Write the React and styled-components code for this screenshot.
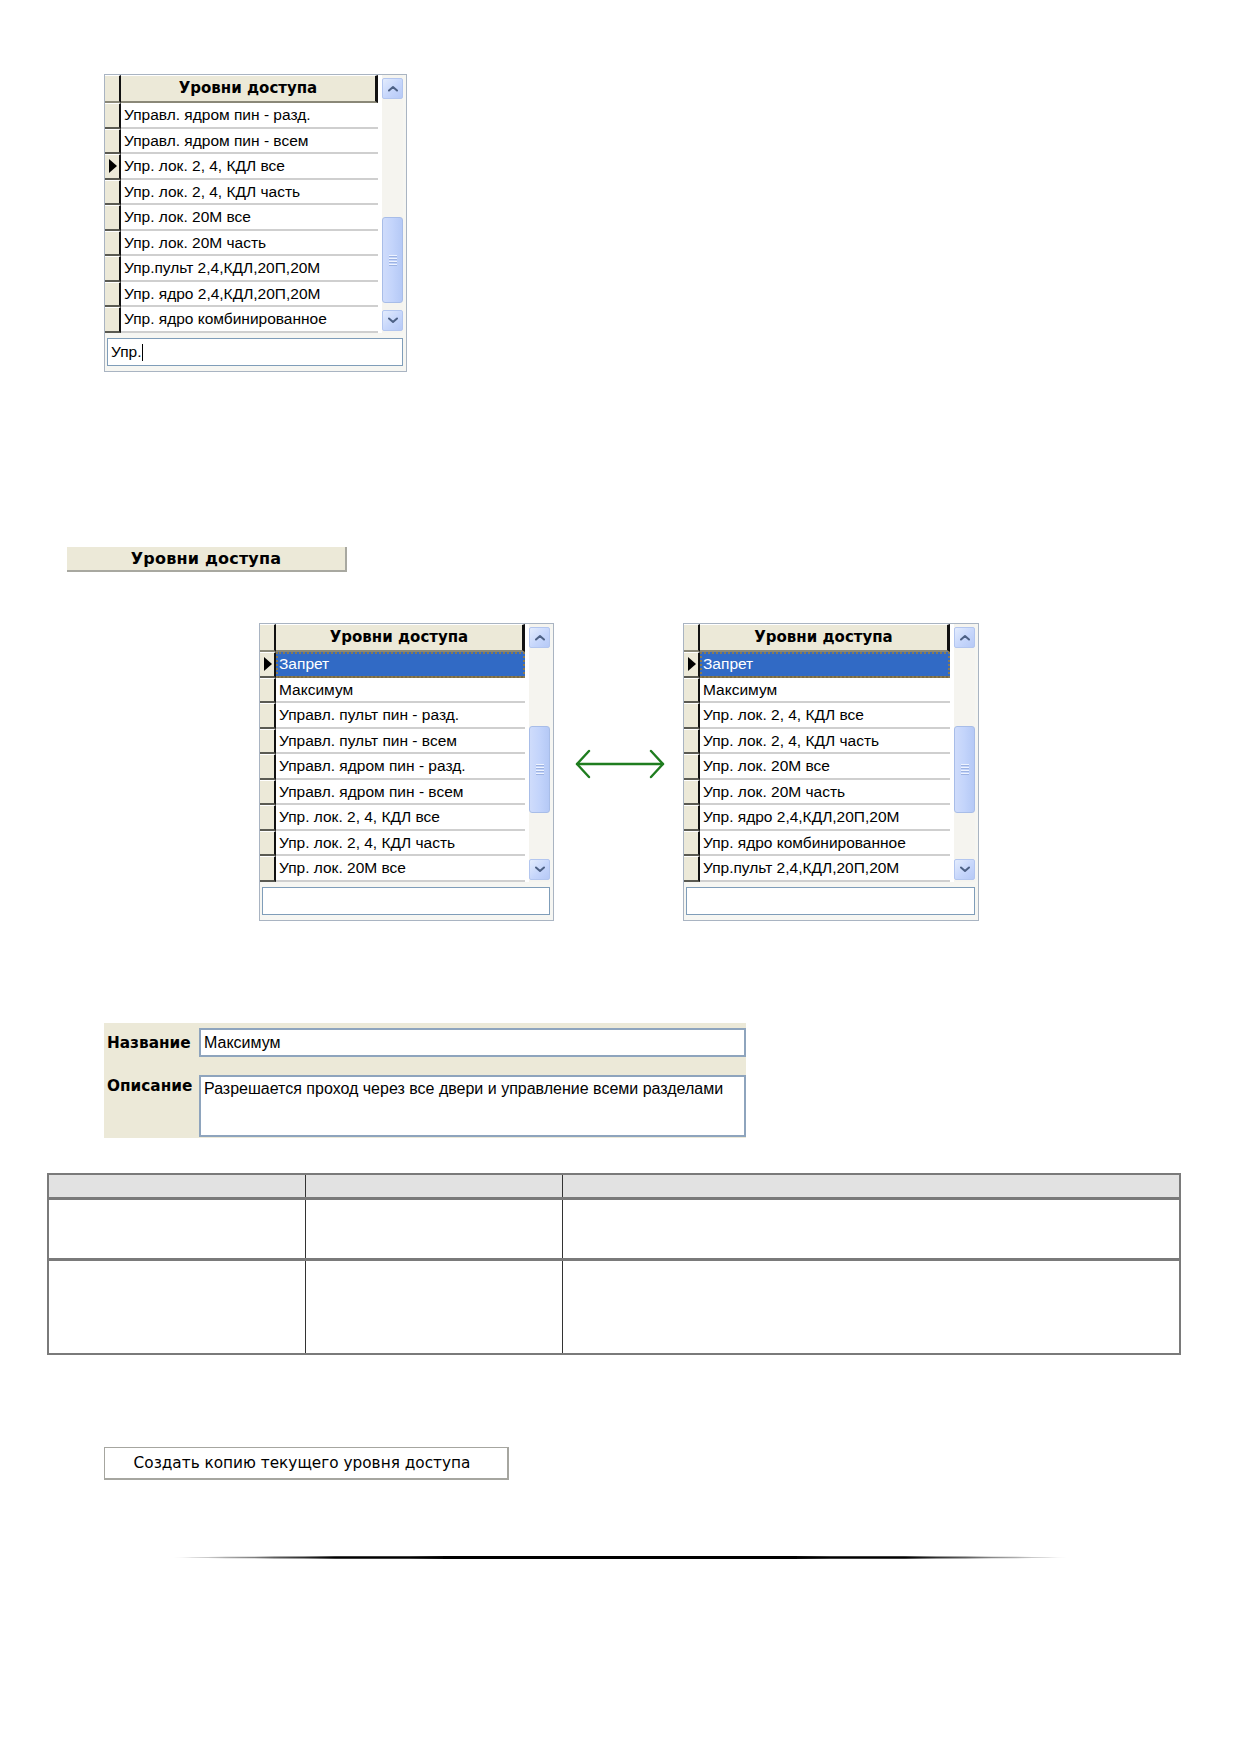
import React from 'react';
import styled, { createGlobalStyle } from 'styled-components';

const GlobalStyle = createGlobalStyle`
  html, body {
    margin: 0;
    padding: 0;
    background: #ffffff;
  }
  body {
    font-family: 'Liberation Sans', Arial, sans-serif;
    color: #000;
  }
`;

const allLevels = [
  'Управл. ядром пин - разд.',
  'Управл. ядром пин - всем',
  'Упр. лок. 2, 4, КДЛ все',
  'Упр. лок. 2, 4, КДЛ часть',
  'Упр. лок. 20М все',
  'Упр. лок. 20М часть',
  'Упр.пульт 2,4,КДЛ,20П,20М',
  'Упр. ядро 2,4,КДЛ,20П,20М',
  'Упр. ядро комбинированное',
];

const beforeSort = [
  'Запрет',
  'Максимум',
  'Управл. пульт пин - разд.',
  'Управл. пульт пин - всем',
  'Управл. ядром пин - разд.',
  'Управл. ядром пин - всем',
  'Упр. лок. 2, 4, КДЛ все',
  'Упр. лок. 2, 4, КДЛ часть',
  'Упр. лок. 20М все',
];

const afterSort = [
  'Запрет',
  'Максимум',
  'Упр. лок. 2, 4, КДЛ все',
  'Упр. лок. 2, 4, КДЛ часть',
  'Упр. лок. 20М все',
  'Упр. лок. 20М часть',
  'Упр. ядро 2,4,КДЛ,20П,20М',
  'Упр. ядро комбинированное',
  'Упр.пульт 2,4,КДЛ,20П,20М',
];

const LevelGrid = ({ width, rows, current, selected, filter, thumbOffset, thumbHeight }) => (
  <GridFrame $width={width}>
    <GridBody>
      <Columns>
        <Row $head>
          <Indicator $head />
          <HeadCell>Уровни доступа</HeadCell>
        </Row>
        {rows.map((name, i) => (
          <Row key={name}>
            <Indicator>{i === current && <Pointer />}</Indicator>
            <Cell $selected={i === selected}>{name}</Cell>
          </Row>
        ))}
      </Columns>
      <ScrollBar>
        <ScrollButton>
          <Chevron viewBox="0 0 10 6"><path d="M1 5 L5 1.5 L9 5" /></Chevron>
        </ScrollButton>
        <Track $offset={thumbOffset}>
          <Thumb $height={thumbHeight}>
            <Grip />
            <Grip />
            <Grip />
            <Grip />
          </Thumb>
        </Track>
        <ScrollButton>
          <Chevron viewBox="0 0 10 6"><path d="M1 1 L5 4.5 L9 1" /></Chevron>
        </ScrollButton>
      </ScrollBar>
    </GridBody>
    <SearchBox>
      {filter}
      {filter && <Caret />}
    </SearchBox>
  </GridFrame>
);

const SwapArrow = () => (
  <ArrowBox>
    <svg width="92" height="30" viewBox="0 0 92 30">
      <g fill="none" stroke="#1f7d1f" strokeWidth="2.4" strokeLinecap="round" strokeLinejoin="round">
        <path d="M3 15 H89" />
        <path d="M15 2 L3 15 L15 28" />
        <path d="M77 2 L89 15 L77 28" />
      </g>
    </svg>
  </ArrowBox>
);

const App = () => (
  <Page>
    <GlobalStyle />
    <FirstBlock>
      <LevelGrid
        width={303}
        rows={allLevels}
        current={2}
        selected={-1}
        filter="Упр."
        thumbOffset={118}
        thumbHeight={86}
      />
    </FirstBlock>

    <TitleBar>Уровни доступа</TitleBar>

    <CompareRow>
      <LevelGrid
        width={295}
        rows={beforeSort}
        current={0}
        selected={0}
        filter=""
        thumbOffset={78}
        thumbHeight={87}
      />
      <SwapArrow />
      <LevelGrid
        width={296}
        rows={afterSort}
        current={0}
        selected={0}
        filter=""
        thumbOffset={78}
        thumbHeight={87}
      />
    </CompareRow>

    <EditPanel>
      <FieldLabel>Название</FieldLabel>
      <NameField>Максимум</NameField>
      <FieldLabel $top>Описание</FieldLabel>
      <NoteField>Разрешается проход через все двери и управление всеми разделами</NoteField>
    </EditPanel>

    <InfoTable>
      <colgroup>
        <col style={{ width: 257 }} />
        <col style={{ width: 257 }} />
        <col />
      </colgroup>
      <thead>
        <tr>
          <HeadTd />
          <HeadTd />
          <HeadTd />
        </tr>
      </thead>
      <tbody>
        <tr>
          <BodyTd $h={58} />
          <BodyTd $h={58} />
          <BodyTd $h={58} />
        </tr>
        <tr>
          <BodyTd $h={92} $last />
          <BodyTd $h={92} $last />
          <BodyTd $h={92} $last />
        </tr>
      </tbody>
    </InfoTable>

    <CopyButton>Создать копию текущего уровня доступа</CopyButton>

    <Divider />
  </Page>
);

// Layout

const Page = styled.div`
  width: 1239px;
  min-height: 1752px;
  padding-top: 74px;
  box-sizing: border-box;
  display: flex;
  flex-direction: column;
  align-items: flex-start;
`;

const FirstBlock = styled.div`
  margin-left: 104px;
`;

const TitleBar = styled.div`
  margin: 175px 0 0 67px;
  width: 278px;
  height: 23px;
  background: #ece9d8;
  border-right: 2px solid #a8a8a0;
  border-bottom: 2px solid #a8a8a0;
  font-family: 'DejaVu Sans', Verdana, sans-serif;
  font-weight: bold;
  font-size: 16px;
  line-height: 23px;
  text-align: center;
  letter-spacing: 0.2px;
`;

const CompareRow = styled.div`
  margin: 51px 0 0 259px;
  display: flex;
  align-items: flex-start;
`;

const ArrowBox = styled.div`
  width: 131px;
  display: flex;
  justify-content: center;
  padding-top: 126px;
  margin-right: -2px;
`;

// Level grid

const GridFrame = styled.div`
  width: ${({ $width }) => $width}px;
  height: 298px;
  box-sizing: border-box;
  border: 1px solid #a9b4c2;
  background: #f6f6f2;
  display: flex;
  flex-direction: column;
  padding-right: 3px;
`;

const GridBody = styled.div`
  display: flex;
  height: 258px;
  background: #ffffff;
`;

const Columns = styled.div`
  flex: 1;
  display: flex;
  flex-direction: column;
`;

const Row = styled.div`
  display: flex;
  height: ${({ $head }) => ($head ? '28px' : '25.5px')};
  flex-shrink: 0;
`;

const Indicator = styled.div`
  width: 16px;
  flex-shrink: 0;
  background: #ece9d8;
  box-sizing: border-box;
  border-top: 1px solid #ffffff;
  border-bottom: 2px solid ${({ $head }) => ($head ? '#8a8878' : '#5a5a52')};
  border-right: 2px solid #111;
  display: flex;
  align-items: center;
  justify-content: center;
`;

const Pointer = styled.span`
  width: 0;
  height: 0;
  border-top: 7px solid transparent;
  border-bottom: 7px solid transparent;
  border-left: 8px solid #000;
  margin-left: 2px;
`;

const HeadCell = styled.div`
  flex: 1;
  background: #ece9d8;
  box-sizing: border-box;
  border-top: 1px solid #ffffff;
  border-bottom: 2px solid #8a8878;
  border-right: 3px solid #111;
  font-family: 'DejaVu Sans', Verdana, sans-serif;
  font-weight: bold;
  font-size: 15px;
  line-height: 25px;
  text-align: center;
  white-space: nowrap;
`;

const Cell = styled.div`
  flex: 1;
  box-sizing: border-box;
  padding-left: 3px;
  font-size: 15.5px;
  line-height: 23px;
  white-space: nowrap;
  overflow: hidden;
  background: ${({ $selected }) => ($selected ? '#316ac5' : '#ffffff')};
  color: ${({ $selected }) => ($selected ? '#ffffff' : '#000000')};
  border-bottom: 2px solid ${({ $selected }) => ($selected ? '#7a6a40' : '#cfcfcf')};
  outline: ${({ $selected }) => ($selected ? '2px dotted #8a7a52' : 'none')};
  outline-offset: -2px;
`;

// Scroll bar

const ScrollBar = styled.div`
  width: 22px;
  flex-shrink: 0;
  margin-left: 3px;
  background: #f5f4ef;
  border-left: 1px solid #ffffff;
  display: flex;
  flex-direction: column;
  padding: 3px 0 2px;
  box-sizing: border-box;
`;

const ScrollButton = styled.div`
  height: 21px;
  flex-shrink: 0;
  box-sizing: border-box;
  border: 1px solid #b3c6ef;
  border-radius: 2px;
  background: linear-gradient(135deg, #e3ecfd 0%, #c6d6fb 55%, #b6c9f6 100%);
  display: flex;
  align-items: center;
  justify-content: center;
`;

const Chevron = styled.svg`
  width: 10px;
  height: 7px;
  fill: none;
  stroke: #4d6185;
  stroke-width: 2;
  stroke-linecap: round;
  stroke-linejoin: round;
`;

const Track = styled.div`
  flex: 1;
  padding-top: ${({ $offset }) => $offset}px;
  box-sizing: border-box;
`;

const Thumb = styled.div`
  height: ${({ $height }) => $height}px;
  box-sizing: border-box;
  border: 1px solid #a8bde8;
  border-radius: 3px;
  background: linear-gradient(90deg, #cfdcfb 0%, #c3d4fb 50%, #b5c9f6 100%);
  display: flex;
  flex-direction: column;
  align-items: center;
  justify-content: center;
  gap: 1px;
`;

const Grip = styled.span`
  width: 8px;
  height: 1px;
  background: #eef3fe;
  border-bottom: 1px solid #9cb2e2;
`;

const SearchBox = styled.div`
  margin: 5px 0 0 2px;
  height: 28px;
  box-sizing: border-box;
  border: 1px solid #7f9db9;
  background: #ffffff;
  display: flex;
  align-items: center;
  padding-left: 3px;
  font-size: 15.5px;
`;

const Caret = styled.span`
  width: 1px;
  height: 17px;
  background: #000;
  margin-left: 1px;
`;

// Edit panel

const EditPanel = styled.div`
  margin: 102px 0 0 104px;
  width: 642px;
  background: #ece9d8;
  box-sizing: border-box;
  padding: 5px 0 1px;
  display: grid;
  grid-template-columns: 95px 1fr;
  row-gap: 18px;
  align-items: center;
`;

const FieldLabel = styled.div`
  align-self: ${({ $top }) => ($top ? 'start' : 'center')};
  padding: ${({ $top }) => ($top ? '2px 0 0 3px' : '0 0 0 3px')};
  font-family: 'DejaVu Sans', Verdana, sans-serif;
  font-weight: bold;
  font-size: 15.3px;
`;

const NameField = styled.div`
  height: 29px;
  box-sizing: border-box;
  border: 2px solid #8ea4bd;
  background: #ffffff;
  padding: 0 3px;
  font-size: 16px;
  line-height: 25px;
`;

const NoteField = styled(NameField)`
  height: 62px;
  line-height: 20px;
  padding-top: 2px;
`;

// Table

const InfoTable = styled.table`
  margin: 35px 0 0 47px;
  width: 1134px;
  border-collapse: collapse;
  table-layout: fixed;
  border: 2px solid #7a7a7a;
`;

const HeadTd = styled.td`
  height: 22px;
  padding: 0;
  background: #e2e2e2;
  border-left: 1px solid #333;
  border-bottom: 3px solid #7a7a7a;
`;

const BodyTd = styled.td`
  height: ${({ $h }) => $h}px;
  padding: 0;
  background: #ffffff;
  border-left: 1px solid #333;
  border-bottom: ${({ $last }) => ($last ? '2px solid #7a7a7a' : '3px solid #7a7a7a')};
`;

// Button and divider

const CopyButton = styled.div`
  margin: 92px 0 0 104px;
  width: 405px;
  height: 33px;
  box-sizing: border-box;
  border: 1px solid #a6a6a0;
  border-right-width: 2px;
  border-bottom-width: 2px;
  background: #ffffff;
  display: flex;
  align-items: center;
  justify-content: center;
  font-family: 'DejaVu Sans', Verdana, sans-serif;
  font-size: 15.3px;
  padding-right: 8px;
`;

const Divider = styled.div`
  margin: 76px 0 0 173px;
  width: 894px;
  height: 3px;
  border-radius: 50%;
  background: linear-gradient(90deg, rgba(0, 0, 0, 0) 0%, #000 18%, #000 82%, rgba(0, 0, 0, 0) 100%);
`;

export default App;
